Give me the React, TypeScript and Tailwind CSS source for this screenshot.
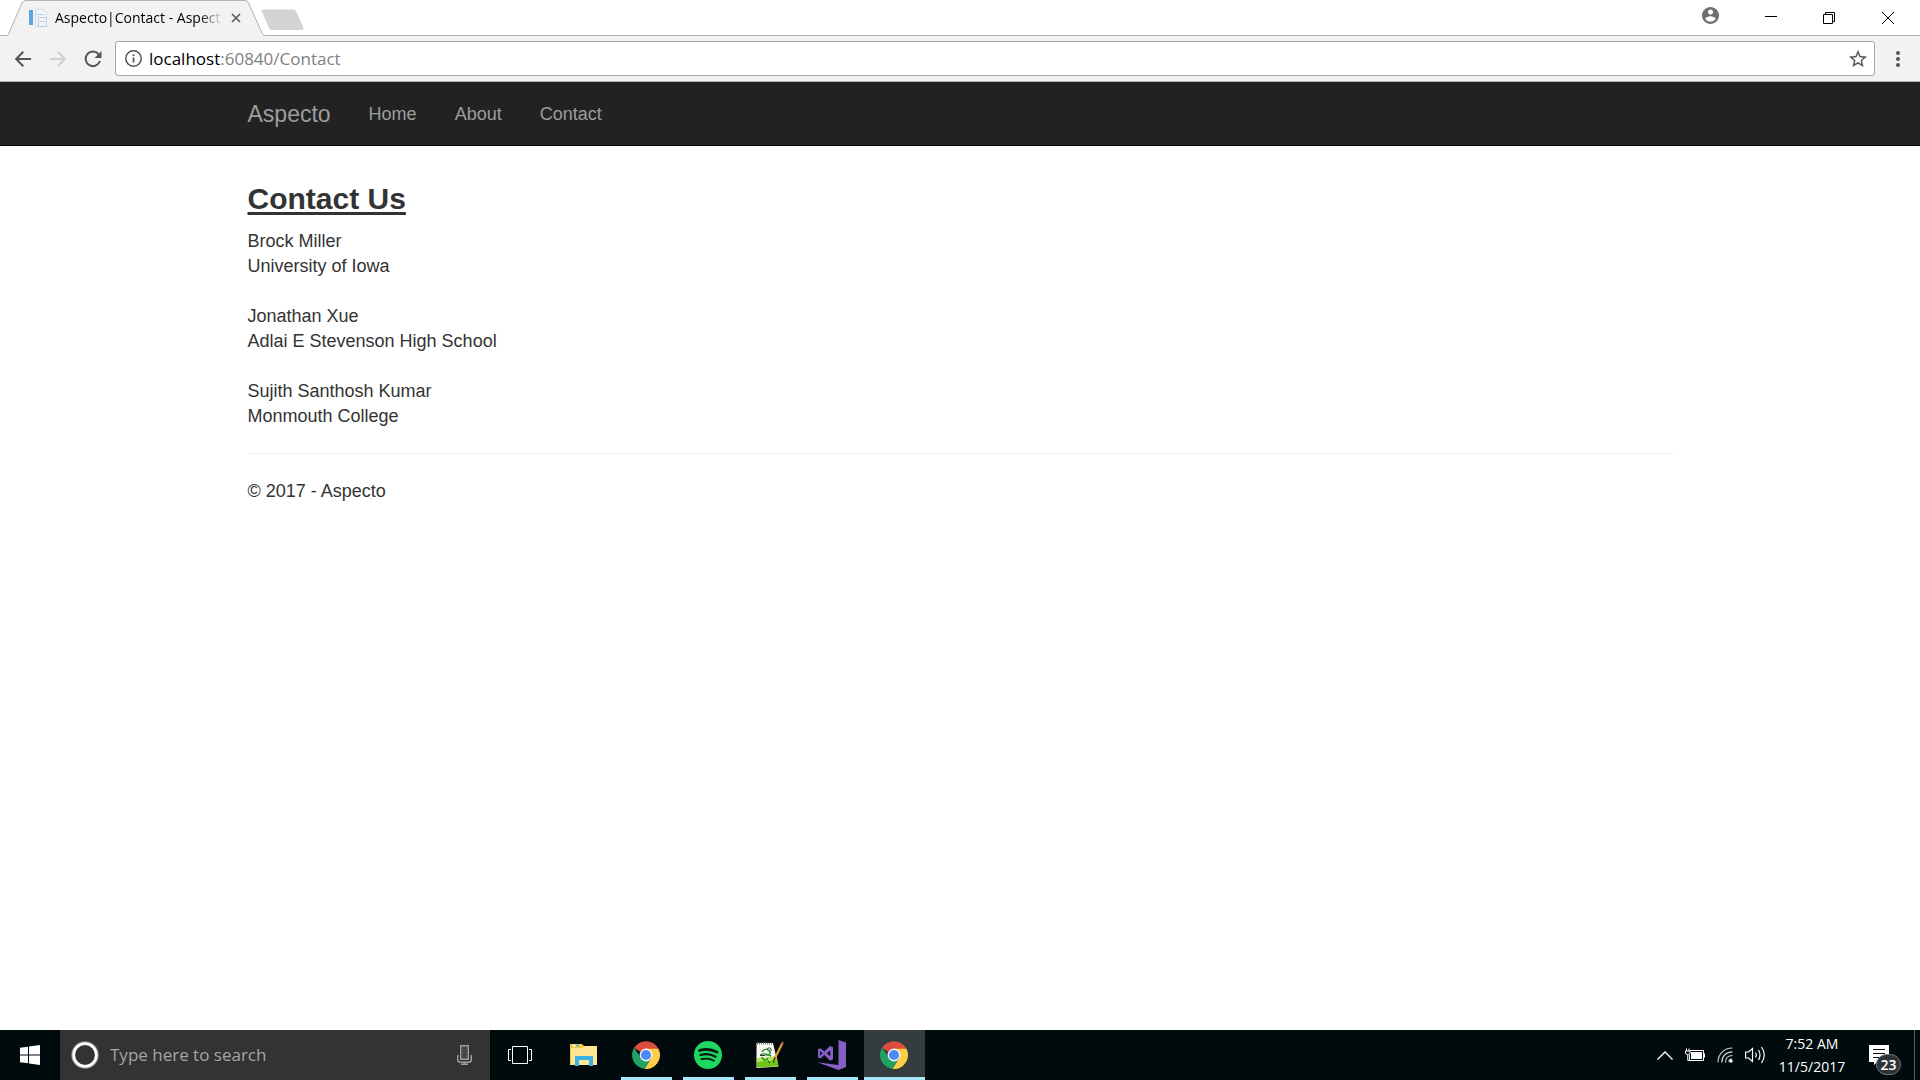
import { useState } from "react";

const CONTACTS = [
  { name: "Brock Miller", school: "University of Iowa" },
  { name: "Jonathan Xue", school: "Adlai E Stevenson High School" },
  { name: "Sujith Santhosh Kumar", school: "Monmouth College" },
];

const NAV_LINKS = [
  { label: "Home", href: "#home" },
  { label: "About", href: "#about" },
  { label: "Contact", href: "#contact" },
];

function ChromeLogo() {
  return (
    <svg width="28" height="28" viewBox="0 0 28 28" aria-hidden="true">
      <path d="M14 14 L2 7 A14 14 0 0 1 26.1 7 L26.1 8 H14 Z" fill="#db4d3f" />
      <path d="M2 6.8 A14 14 0 0 0 12.6 27.9 L18.5 18 L9 17 Z" fill="#1ea362" />
      <path d="M14 7.8 H26.5 A14 14 0 0 1 12.6 27.9 L19.3 17 Z" fill="#ffcd46" />
      <circle cx="14" cy="14" r="6.4" fill="#f4f4f4" />
      <circle cx="14" cy="14" r="5.1" fill="#4c8bf5" />
    </svg>
  );
}

function SpotifyLogo() {
  return (
    <svg width="28" height="28" viewBox="0 0 28 28" fill="none" aria-hidden="true">
      <circle cx="14" cy="14" r="14" fill="#1ed760" />
      <g stroke="#07140f" strokeLinecap="round">
        <path d="M5.5 9.5 C11 7.8 18 8.3 23 11.2" strokeWidth="2.7" />
        <path d="M6.5 14 C11.5 12.6 17 13.2 21.5 15.8" strokeWidth="2.2" />
        <path d="M7.3 18.1 C12 17 16.2 17.5 20 19.8" strokeWidth="1.8" />
      </g>
    </svg>
  );
}

function NotepadLogo() {
  return (
    <svg width="28" height="28" viewBox="0 0 28 28" fill="none" aria-hidden="true">
      <path d="M0.5 2 L17 2 L22.5 25.5 L0.5 27 Z" fill="#f5f7f0" />
      <path d="M1 17 L20.3 15 L22.3 25 L1 26.5 Z" fill="#b4e85c" />
      <path d="M1 21 L21.3 19 L22.3 25 L1 26.5 Z" fill="#6fc21a" />
      <path d="M1 2.5 H17" stroke="#777" strokeWidth="2" strokeDasharray="1 1" />
      <path d="M6 11 C8 7 13 8 14 11 C15 14 11 15 9 13 M4 14 C7 12 11 13 15 15 M6 16 C7 20 11 20 12 17" stroke="#2c8a2c" strokeWidth="1.4" />
      <path d="M11 8 C13 6 16 7 15 10 M4 14.5 H9 M12 20 L14 22 M17 19 L18 22" stroke="#26352a" />
      <path d="M18.5 18 L26.5 2" stroke="#e39a28" strokeWidth="2.2" />
      <path d="M18 19.5 L19 16.5" stroke="#4a3522" strokeWidth="1.5" />
      <path d="M25.8 3.2 L27 1" stroke="#b6574d" strokeWidth="2.2" />
    </svg>
  );
}

function VisualStudioLogo() {
  return (
    <svg width="30" height="30" viewBox="0 0 30 30" fill="#865fc5" aria-hidden="true">
      <path d="M21.5 0 L29 2.5 V27 L21.5 30 L0 22.3 L21.5 25 Z" />
      <path
        fillRule="evenodd"
        d="M1 9.2 L3.3 8.2 L7.4 11.6 L13 6 L16 7.3 V19.3 L13 20.7 L7.4 15.1 L3.3 18.4 L1 17.4 Z M3.1 11 V15.6 L5.5 13.3 Z M9.8 13.3 L13.2 16.3 V10.4 Z"
      />
    </svg>
  );
}

function ExplorerLogo() {
  return (
    <svg width="28" height="24" viewBox="0 0 28 24" aria-hidden="true">
      <path d="M0 1 H12 L14 3 H27 V22 H0 Z" fill="#fdc73c" />
      <path d="M3 1.500 H9 V3.500 H3 Z" fill="#fff" />
      <path d="M5.500 1.500 H9 V3.500 H5.500 Z" fill="#4ab6a3" />
      <path d="M1 5 H12 L14 3 H27 V22 H1 Z" fill="#ffe694" />
      <path d="M5 13 H23 V23 H19 V17 H9 V23 H5 Z" fill="#3db2e7" />
    </svg>
  );
}

function TabStrip() {
  return (
    <header className="flex h-9 items-stretch justify-between border-b border-[#b2b2b2] bg-white">
      <div className="flex">
        <div className="relative -mb-px flex h-9 w-[266px] items-center pl-7">
          <svg className="absolute inset-0" width="266" height="36" viewBox="0 0 266 36" aria-hidden="true">
            <path d="M7 36 L8 35 L22 3 Q23.500 0.500 26 0.500 H245 Q247.500 0.500 248.500 3 L263 35 L265 36 Z" fill="#f2f2f2" />
            <path
              d="M0 35.500 H7 Q8 35.500 8.500 34 L22 3 Q23.500 0.500 26 0.500 H245 Q247.500 0.500 248.500 3 L262.500 34 Q263.200 35.500 266 35.500"
              fill="none"
              stroke="#b2b2b2"
            />
          </svg>
          <svg className="relative shrink-0" width="20" height="20" viewBox="0 0 20 20" aria-hidden="true">
            <path d="M1 2 H5 V17 H1 Z" fill="#5ba7dc" />
            <path d="M7.500 1 H15 L18.500 4.500 V18.500 H7.500 Z" fill="#f0f3f8" stroke="#d3d9e4" />
            <path d="M10.500 9.500 H18.500 V18.500 H10.500 Z M8 6.500 H16 M12 13.500 H17" fill="none" stroke="#c3ccdc" />
          </svg>
          <span className="relative ml-[7px] w-[168px] text-[14px] leading-5 whitespace-nowrap [mask-image:linear-gradient(to_right,black_86%,transparent)]">
            Aspecto|Contact - Aspect
          </span>
          <button
            type="button"
            aria-label="Close tab"
            className="relative ml-[5px] flex size-4 shrink-0 items-center justify-center"
          >
            <svg width="10" height="10" viewBox="0 0 10 10" stroke="#5a5a5a" strokeWidth="1.700">
              <path d="M1 1 L9 9 M9 1 L1 9" />
            </svg>
          </button>
        </div>
        <button type="button" aria-label="New tab" className="-ml-[5px] flex h-9 items-center pt-[3px]">
          <svg width="44" height="22" viewBox="0 0 44 22">
            <path
              d="M2 0.500 H32 Q34 0.500 35 2 L42.500 19 Q43 21 41 21 H11 Q9 21 8 19 L0.800 2.500 Q0 0.500 2 0.500 Z"
              fill="#d3d3d3"
            />
          </svg>
        </button>
      </div>
      <div className="flex">
        <button type="button" aria-label="Profile" className="flex h-[30px] w-12 items-center justify-center">
          <svg width="17" height="17" viewBox="2 2 20 20" fill="#707070">
            <path d="M12 2C6.480 2 2 6.480 2 12s4.480 10 10 10 10-4.480 10-10S17.520 2 12 2zm0 3c1.660 0 3 1.340 3 3s-1.340 3-3 3-3-1.340-3-3 1.340-3 3-3zm0 14.200c-2.500 0-4.710-1.280-6-3.220.030-1.990 4-3.080 6-3.080 1.990 0 5.970 1.090 6 3.080-1.290 1.940-3.500 3.220-6 3.220z" />
          </svg>
        </button>
        <button type="button" aria-label="Minimize" className="ml-2 flex w-[58px] items-center justify-center">
          <svg width="12" height="12" viewBox="0 0 12 12" stroke="#000">
            <path d="M0 4.500 H12" />
          </svg>
        </button>
        <button type="button" aria-label="Restore" className="flex w-[58px] items-center justify-center">
          <svg width="12" height="12" viewBox="0 0 12 12" fill="none" stroke="#000">
            <path d="M0.500 2.500 H9.500 V11.500 H0.500 Z M2.500 2.500 V0.500 H11.500 V9.500 H9.500" />
          </svg>
        </button>
        <button type="button" aria-label="Close" className="mr-[3px] flex w-[59px] items-center justify-center">
          <svg width="12" height="12" viewBox="0 0 12 12" stroke="#000">
            <path d="M0 0 L12 12 M12 0 L0 12" />
          </svg>
        </button>
      </div>
    </header>
  );
}

function Toolbar() {
  return (
    <div className="flex h-[46px] items-center border-b border-[#b4b4b4] bg-[#f2f2f2]">
      <button type="button" aria-label="Back" className="ml-[15px]">
        <svg width="16" height="16" viewBox="0 0 16 16" fill="none" stroke="#555" strokeWidth="2">
          <path d="M16 8 H1.500 M8.300 0.700 L1.200 8 L8.300 15.300" />
        </svg>
      </button>
      <button type="button" aria-label="Forward" className="ml-[19px]">
        <svg width="16" height="16" viewBox="0 0 16 16" fill="none" stroke="#d0d0d0" strokeWidth="2">
          <path d="M0 8 H14.500 M7.700 0.700 L14.800 8 L7.700 15.300" />
        </svg>
      </button>
      <button type="button" aria-label="Reload" className="ml-[18px]">
        <svg width="18" height="18" viewBox="0 0 18 18" fill="none">
          <path d="M14.600 4.200 A7.300 7.300 0 1 0 15.900 11" stroke="#555" strokeWidth="2" />
          <path d="M17.500 1 V8 H10.500 Z" fill="#555" />
        </svg>
      </button>
      <div className="ml-[13px] flex h-[35px] flex-1 items-center rounded-[3px] border border-[#a8a8a8] bg-white pr-[7px] pl-[9px]">
        <svg width="17" height="17" viewBox="0 0 17 17" fill="none" stroke="#555" aria-hidden="true">
          <circle cx="8.500" cy="8.500" r="7.700" strokeWidth="1.500" />
          <path d="M8.500 7.500 V12.500 M8.500 4.200 V6" strokeWidth="1.700" />
        </svg>
        <a href="#contact" className="ml-[7px] flex-1 text-[17px] leading-6 text-[#808080]">
          <span className="text-black">localhost</span>:60840/Contact
        </a>
        <button type="button" aria-label="Bookmark this page">
          <svg width="18" height="18" viewBox="2 2 20 20" fill="#555">
            <path d="M22 9.240l-7.190-.62L12 2 9.190 8.630 2 9.240l5.460 4.730L5.820 21 12 17.270 18.180 21l-1.630-7.030L22 9.240zM12 15.400l-3.760 2.270 1-4.280-3.320-2.880 4.380-.38L12 6.100l1.710 4.040 4.380.38-3.320 2.880 1 4.280L12 15.400z" />
          </svg>
        </button>
      </div>
      <button type="button" aria-label="Menu" className="mr-5 ml-[21px]">
        <svg width="4" height="16" viewBox="0 0 4 16" fill="#555">
          <circle cx="2" cy="2" r="2" />
          <circle cx="2" cy="8" r="2" />
          <circle cx="2" cy="14" r="2" />
        </svg>
      </button>
    </div>
  );
}

function ContactPage() {
  return (
    <div className="flex-1 bg-white font-['Liberation_Sans',Arial,sans-serif] text-[18px] leading-[25px] text-[#333]">
      <nav className="border-b border-black bg-[#222] text-[#9d9d9d]">
        <div className="mx-auto flex h-[63px] max-w-[1463px] items-center px-[19px] pt-[2px]">
          <a href="#home" className="mr-[19px] text-[23px]">
            Aspecto
          </a>
          {NAV_LINKS.map((link) => (
            <a key={link.label} href={link.href} className="px-[19px]">
              {link.label}
            </a>
          ))}
        </div>
      </nav>
      <main className="mx-auto max-w-[1463px] px-[19px] pt-8">
        <h2 className="mb-[10px] text-[30px] leading-[41px] font-bold underline decoration-[3px] underline-offset-[3px]">
          Contact Us
        </h2>
        <div className="flex flex-col gap-[25px]">
          {CONTACTS.map((contact) => (
            <address key={contact.name} className="not-italic">
              {contact.name}
              <br />
              {contact.school}
            </address>
          ))}
        </div>
        <hr className="mt-6 mb-[25px] border-[#eee]" />
        <footer>
          <p>© 2017 - Aspecto</p>
        </footer>
      </main>
    </div>
  );
}

function Taskbar() {
  const [search, setSearch] = useState("");

  const apps = [
    { name: "Chrome", icon: <ChromeLogo /> },
    { name: "Spotify", icon: <SpotifyLogo /> },
    { name: "Notepad++", icon: <NotepadLogo /> },
    { name: "Visual Studio", icon: <VisualStudioLogo /> },
  ];

  return (
    <div className="flex h-[50px] items-stretch bg-[#010b0e] text-white">
      <button type="button" aria-label="Start" className="flex w-[60px] items-center justify-center">
        <svg width="20" height="20" viewBox="0 0 20 20" fill="#fff">
          <path d="M0 2.800 L8 1.700 V9.400 H0 Z M9 1.500 L20 0 V9.400 H9 Z M0 10.400 H8 V18.300 L0 17.200 Z M9 10.400 H20 V20 L9 18.500 Z" />
        </svg>
      </button>
      <label className="flex w-[430px] items-center bg-[#333] pr-[18px] pl-[11px]">
        <svg width="28" height="28" viewBox="0 0 28 28" fill="none" aria-hidden="true">
          <circle cx="14" cy="14" r="12.500" stroke="#8b8b8b" strokeWidth="2.500" />
          <circle cx="14" cy="14" r="11.300" stroke="#fff" strokeWidth="2.800" />
        </svg>
        <input
          type="text"
          aria-label="Search"
          placeholder="Type here to search"
          value={search}
          onChange={(e) => setSearch(e.target.value)}
          className="ml-[11px] min-w-0 flex-1 bg-transparent text-[17px] leading-6 outline-none placeholder:text-[#a5a5a5]"
        />
        <svg width="15" height="20" viewBox="0 0 15 20" fill="none" stroke="#a0a0a0" aria-hidden="true">
          <path d="M3.700 0.700 H11.300 V14.300 H3.700 Z" strokeWidth="1.400" />
          <path d="M5.500 2.500 H9.500 V12.500 H5.500 Z" fill="#444" stroke="#555" strokeWidth="0.800" />
          <path
            d="M0.700 10 V14.500 Q0.700 17.300 3.500 17.300 H11.500 Q14.300 17.300 14.300 14.500 V10 M7.500 17 V19.500 M4 19.300 H11"
            strokeWidth="1.400"
          />
        </svg>
      </label>
      <button type="button" aria-label="Task view" className="flex w-[60px] items-center justify-center">
        <svg width="24" height="18" viewBox="0 0 24 18" fill="none" stroke="#fff">
          <path d="M4.500 0.500 H19.500 V17.500 H4.500 Z M3 3.500 H0.500 V14.500 H3 M21 3.500 H23.500 V14.500 H21" />
        </svg>
      </button>
      <button type="button" aria-label="File Explorer" className="mr-[3px] flex w-[68px] items-center justify-center">
        <ExplorerLogo />
      </button>
      {apps.map((app) => (
        <button
          key={app.name}
          type="button"
          aria-label={app.name}
          className="mr-[11px] flex w-[51px] items-center justify-center border-b-[3px] border-[#a6e7fb] pt-[3px] pr-px"
        >
          {app.icon}
        </button>
      ))}
      <button
        type="button"
        aria-label="Chrome window"
        className="-ml-[5px] flex w-[61px] items-center justify-center border-b-[3px] border-[#a6e7fb] bg-[#343c3e] pt-[3px] pr-px"
      >
        <ChromeLogo />
      </button>
      <div className="ml-auto flex items-center">
        <button type="button" aria-label="Show hidden icons">
          <svg width="16" height="9" viewBox="0 0 16 9" fill="none" stroke="#fff" strokeWidth="1.300">
            <path d="M0.500 8.500 L8 1 L15.500 8.500" />
          </svg>
        </button>
        <svg className="ml-3" width="20" height="14" viewBox="0 0 20 14" fill="none" stroke="#fff" aria-hidden="true">
          <path d="M5 2.500 H18.500 V12.500 H4.500 V7 M19.500 5.500 V9.500" />
          <path d="M6 4 H17 V11 H6 Z" fill="#fff" stroke="none" />
          <path d="M0.500 3 H5 V5 Q5 6.500 2.750 6.500 Q0.500 6.500 0.500 5 Z" fill="#010b0e" />
          <path d="M1.500 0.500 V3 M4 0.500 V3 M2.750 6.500 V12.500 H5" />
        </svg>
        <svg
          className="ml-3"
          width="17"
          height="16"
          viewBox="0 0 17 16"
          fill="none"
          stroke="#c9cdce"
          strokeWidth="1.200"
          aria-hidden="true"
        >
          <path d="M1 15.500 C1 7 7 1 15.500 1 M4.800 15.500 C4.800 9 9 4.800 15.500 4.800 M8.500 15.500 C8.500 11 11 8.500 15.500 8.500" />
          <path d="M12 15 C11.800 13 13 12 15 12" />
          <circle cx="14" cy="14" r="1.700" fill="#fff" stroke="none" />
        </svg>
        <svg
          className="ml-[11px]"
          width="21"
          height="18"
          viewBox="0 0 21 18"
          fill="none"
          stroke="#fff"
          strokeWidth="1.200"
          aria-hidden="true"
        >
          <path d="M0.600 6 H3.500 L7.500 2.500 V15.500 L3.500 12 H0.600 Z M10.500 6.500 Q12 9 10.500 11.500 M13.500 4 Q16.500 9 13.500 14 M16.500 1 Q22 9 16.500 17" />
        </svg>
        <div className="ml-[11px] flex w-[70px] flex-col items-center text-[14px] leading-[23px] whitespace-nowrap">
          <span>7:52 AM</span>
          <span>11/5/2017</span>
        </div>
        <button type="button" aria-label="23 notifications" className="relative ml-[22px] h-10 w-8">
          <svg className="absolute top-[10px] left-0" width="20" height="20" viewBox="0 0 20 20">
            <path d="M0 0 H20 V17 H8 L5 20 V17 H0 Z" fill="#fff" />
            <path d="M4 4.500 H16 M4 8.500 H16 M4 12.500 H12" stroke="#010b0e" strokeWidth="1.200" />
          </svg>
          <span className="absolute top-[19px] left-[7px] flex h-[21px] w-[25px] items-center justify-center rounded-full border border-[#777] bg-[#2d3436] text-[14px] leading-4 font-semibold">
            23
          </span>
        </button>
        <div className="ml-[13px] h-[50px] w-[6px] border-l border-[#596163]" />
      </div>
    </div>
  );
}

export default function App() {
  return (
    <div className="flex min-h-screen flex-col bg-white font-['Open_Sans','Noto_Sans',sans-serif]">
      <TabStrip />
      <Toolbar />
      <ContactPage />
      <Taskbar />
    </div>
  );
}
